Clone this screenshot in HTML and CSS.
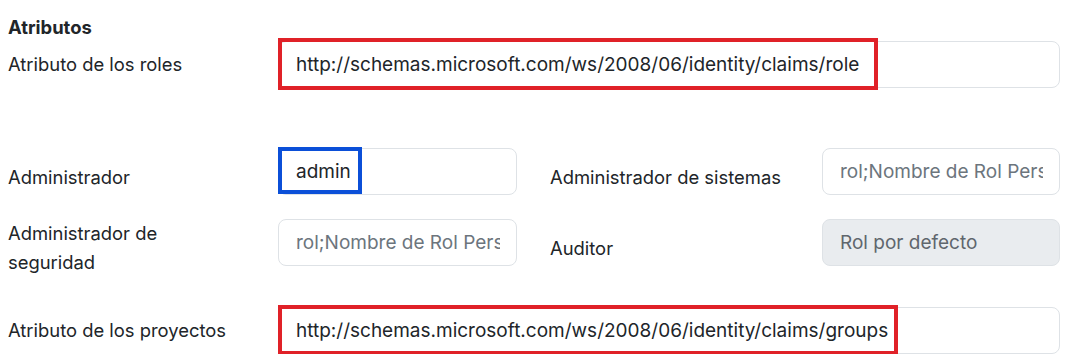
FILE: index.html
```html
<!DOCTYPE html>
<html lang="es">
<head>
    <meta charset="UTF-8">
    <meta name="viewport" content="width=device-width, initial-scale=1.0">
    <title>Atributos</title>
    <link rel="stylesheet" href="styles.css">
</head>
<body>
    <div class="form-section">
        <h2 class="section-title">Atributos</h2>

        <div class="form-row wide">
            <label class="form-label">Atributo de los roles</label>
            <div class="field">
                <input class="form-input" type="text" value="http://schemas.microsoft.com/ws/2008/06/identity/claims/role">
                <span class="mark mark-red mark-roles"></span>
            </div>
        </div>

        <div class="form-grid">
            <label class="form-label">Administrador</label>
            <div class="field">
                <input class="form-input" type="text" value="admin">
                <span class="mark mark-blue mark-admin"></span>
            </div>
            <label class="form-label second">Administrador de sistemas</label>
            <div class="field">
                <input class="form-input" type="text" placeholder="rol;Nombre de Rol Personalizado">
            </div>

            <label class="form-label">Administrador de<br>seguridad</label>
            <div class="field">
                <input class="form-input" type="text" placeholder="rol;Nombre de Rol Personalizado">
            </div>
            <label class="form-label second">Auditor</label>
            <div class="field">
                <input class="form-input" type="text" value="Rol por defecto" disabled>
            </div>
        </div>

        <div class="form-row wide last">
            <label class="form-label">Atributo de los proyectos</label>
            <div class="field">
                <input class="form-input" type="text" value="http://schemas.microsoft.com/ws/2008/06/identity/claims/groups">
                <span class="mark mark-red mark-groups"></span>
            </div>
        </div>
    </div>
</body>
</html>
```

FILE: styles.css
```css
body {
    margin: 0;
    background-color: #fff;
    font-family: Inter, "Noto Sans", sans-serif;
    color: #212529;
}

.form-section {
    width: 1052px;
    padding: 15px 0 0 8px;
}

.section-title {
    margin: 0 0 2px 0;
    font-size: 18.4px;
    font-weight: 700;
    line-height: 24px;
}

.form-row {
    display: grid;
    grid-template-columns: 270px 1fr;
    align-items: center;
}

.form-row.last {
    margin-top: 30px;
}

.form-grid {
    display: grid;
    grid-template-columns: 270px 239px 305px 1fr;
    grid-auto-rows: 58px;
    row-gap: 13px;
    margin-top: 60px;
}

.form-grid .form-label {
    align-self: center;
}

.form-label {
    font-size: 18.4px;
    line-height: 29px;
}

.form-label.second {
    padding-left: 33px;
}

.field {
    position: relative;
}

.form-input {
    box-sizing: border-box;
    display: block;
    width: 100%;
    height: 47px;
    padding: 0 16px 0 17px;
    font-family: Inter, "Noto Sans", sans-serif;
    font-size: 19px;
    color: #212529;
    background-color: #fff;
    border: 1px solid #dee2e6;
    border-radius: 8px;
    outline: none;
}

.form-input::placeholder {
    color: #6c757d;
}

.form-input:disabled {
    background-color: #e9ecef;
    color: #5f666d;
}

/* annotation boxes drawn over the inputs */
.mark {
    position: absolute;
    left: 0;
    box-sizing: border-box;
    border: 4px solid;
    pointer-events: none;
}

.mark-red {
    border-color: #e02128;
}

.mark-blue {
    border-color: #0b4fd8;
}

.mark-roles {
    top: -3px;
    width: 600px;
    height: 52px;
}

.mark-admin {
    top: -1px;
    width: 84px;
    height: 47px;
}

.mark-groups {
    top: -2px;
    width: 620px;
    height: 50px;
}
```
